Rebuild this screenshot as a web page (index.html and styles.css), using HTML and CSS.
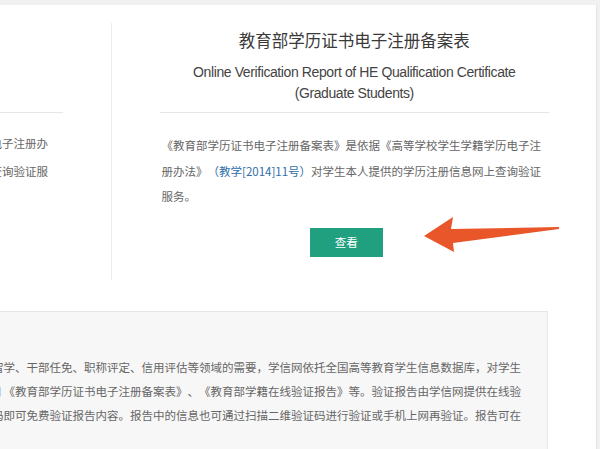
FILE: index.html
```html
<!DOCTYPE html>
<html lang="zh-CN">
<head>
    <meta charset="UTF-8">
    <meta name="viewport" content="width=device-width, initial-scale=1.0">
    <link rel="stylesheet" href="styles.css">
</head>
<body>
<div class="page">
    <div class="reports">
        <div class="report report-left">
            <h2>教育部学籍在线验证报告</h2>
            <p class="en">Online Verification Report of Student Record<br>(Graduate Students)</p>
            <p class="desc">《教育部学籍在线验证报告》是依据《高等学校学生学籍学历电子注册办<br>法》（教学[2014]11号）对学生本人提供的学籍注册信息网上查询验证服<br>务。</p>
            <a class="btn" href="#">查看</a>
        </div>
        <div class="report report-right">
            <h2>教育部学历证书电子注册备案表</h2>
            <p class="en">Online Verification Report of HE Qualification Certificate<br>(Graduate Students)</p>
            <p class="desc">《教育部学历证书电子注册备案表》是依据《高等学校学生学籍学历电子注册办法》<a href="#">（教学[2014]11号）</a>对学生本人提供的学历注册信息网上查询验证服务。</p>
            <a class="btn" href="#">查看</a>
            <svg class="arrow" width="138" height="38" viewBox="0 0 138 38">
                <polygon points="1,20 30,1 28,13 136,11 136,13 30,27 31,36" fill="#e8562a"/>
            </svg>
        </div>
    </div>

    <div class="notice">
        <p>为满足社会各界对学历学籍信息查询验证的需要，以及就业、出国留学、干部任免、职称评定、信用评估等领域的需要，学信网依托全国高等教育学生信息数据库，对学生</p>
        <p>本人提供学历、学籍在线验证报告服务，如 《教育部学历证书电子注册备案表》、《教育部学籍在线验证报告》等。验证报告由学信网提供在线验</p>
        <p>证服务，用人单位等登录学信网输入在线验证码即可免费验证报告内容。报告中的信息也可通过扫描二维验证码进行验证或手机上网再验证。报告可在</p>
    </div>
</div>
</body>
</html>
```

FILE: styles.css
```css
html {
	overflow: hidden;
}

body {
	margin: 0;
	padding: 0;
	background-color: #f1f1f1;
	font-family: "Noto Sans CJK SC", "Liberation Sans", sans-serif;
	color: #666;
	text-spacing-trim: space-all;
}

.page {
	background-color: #fff;
	margin-top: 5px;
	margin-left: -375px;
	width: 971px;
	border-right: 1px solid #e3e3e3;
	padding-top: 18px;
	min-height: 600px;
}

.reports {
	display: flex;
}

.report {
	width: 486px;
	box-sizing: border-box;
	padding: 0 47px 23px 49px;
	text-align: center;
}

.report-left {
	padding-left: 53px;
	padding-right: 48px;
}

.report-right {
	position: relative;
	border-left: 1px solid #ececec;
	padding-left: 48px;
}

.report-left .en {
	margin-left: -4px;
}

.report h2 {
	margin: 5px 0 0;
	font-size: 16.5px;
	line-height: 24px;
	font-weight: normal;
	color: #3a3a3a;
}

.report .en {
	margin: 10px 0 0;
	padding-bottom: 8px;
	border-bottom: 1px solid #e6e6e6;
	font-family: "Liberation Sans", sans-serif;
	font-size: 14px;
	letter-spacing: -0.4px;
	line-height: 21px;
	color: #444;
}

.report .desc {
	margin: 20px 0 0;
	padding: 0 7px 0 2px;
	text-align: left;
	font-size: 11.5px;
	line-height: 25.5px;
	color: #666;
}

.report-left .desc {
	margin-top: 16px;
	line-height: 28px;
}

.report .desc a {
	color: #2f6ea8;
	text-decoration: none;
}

.btn {
	display: inline-block;
	margin: 18px 16px 0 0;
	width: 73px;
	height: 29px;
	line-height: 29px;
	background-color: #21a07f;
	color: #fff;
	font-size: 11.5px;
	text-decoration: none;
}

.report-left .btn {
	margin-top: 12px;
}

.arrow {
	position: absolute;
	left: 311px;
	top: 193px;
}

.notice {
	margin: 31px 48px 0 0;
	padding: 43px 26px 40px 0;
	background-color: #f7f7f7;
	border: 1px solid #e6e6e6;
	min-height: 200px;
}

.notice p {
	margin: 0;
	text-align: right;
	white-space: nowrap;
	font-size: 11.5px;
	line-height: 24px;
	color: #666;
}
```
